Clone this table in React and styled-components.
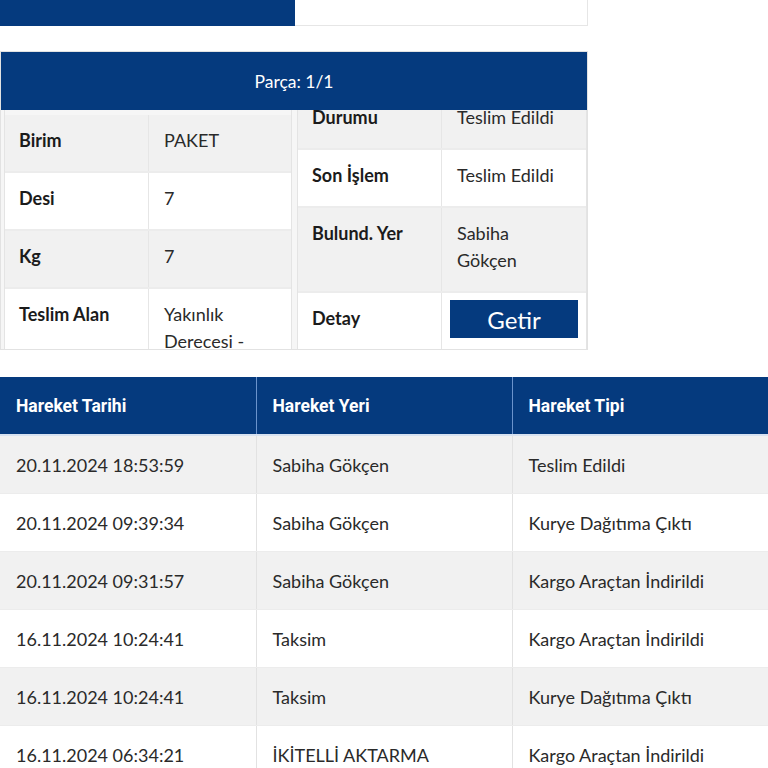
import React from 'react';
import styled, { createGlobalStyle } from 'styled-components';

const GlobalStyle = createGlobalStyle`
  html, body {
    margin: 0;
    padding: 0;
    background: #fff;
  }
  body {
    font-family: Lato, "Open Sans", sans-serif;
    color: #222;
  }
`;

const NAVY = '#053a7e';

const Page = styled.div`
  width: 768px;
`;

const TabStrip = styled.div`
  display: flex;
  width: 588px;
  height: 26px;
`;

const Tab = styled.div`
  flex: 0 0 ${p => p.w}px;
  background: ${p => (p.active ? NAVY : '#fff')};
  border-bottom: ${p => (p.active ? 'none' : '1px solid #e6e6e6')};
  border-right: ${p => (p.active ? 'none' : '1px solid #e6e6e6')};
  box-sizing: border-box;
`;

const Panel = styled.section`
  margin-top: 25px;
  width: 588px;
  border: 1px solid #e2e2e2;
  box-sizing: border-box;
  background: #f6f6f6;
`;

const PanelHeader = styled.div`
  height: 58px;
  background: ${NAVY};
  color: #fff;
  font-size: 17.5px;
  display: flex;
  align-items: center;
  justify-content: center;
  position: relative;
  z-index: 1;
`;

const PanelBody = styled.div`
  display: flex;
  gap: 5px;
  height: 239px;
  padding: 0 1px 0 3px;
`;

const Column = styled.div`
  flex: 0 0 ${p => p.w}px;
  overflow: hidden;
  border-left: 1px solid #e4e4e4;
  border-right: 1px solid #e4e4e4;
  box-sizing: border-box;
`;

const ColumnInner = styled.div`
  margin-top: ${p => p.offset}px;
`;

const InfoRow = styled.div`
  display: grid;
  grid-template-columns: 144px 1fr;
  background: ${p => (p.alt ? '#f1f1f1' : '#fff')};
  border-bottom: 2px solid #ececec;
`;

const InfoLabel = styled.div`
  padding: 12px 14px 17px;
  line-height: 27px;
  font-size: 18px;
  font-weight: 700;
  color: #1b1b1b;
  border-right: 1px solid #e6e6e6;
  align-self: stretch;
`;

const InfoValue = styled.div`
  padding: ${p => (p.button ? '7px 8px 11px' : '12px 15px 17px')};
  line-height: 27px;
  font-size: 18px;
  color: #2a2a2a;
`;

const GetirButton = styled.button`
  display: block;
  width: 128px;
  height: 38px;
  border: none;
  background: ${NAVY};
  color: #fff;
  font-family: Lato, sans-serif;
  font-size: 24px;
  padding: 0;
  cursor: pointer;
`;

const Moves = styled.table`
  margin-top: 27px;
  width: 768px;
  border-collapse: collapse;
  table-layout: fixed;
`;

const HeadCell = styled.th`
  height: 57px;
  background: ${NAVY};
  color: #fff;
  text-align: left;
  padding: 0 16px;
  font-family: Roboto, "Liberation Sans", sans-serif;
  font-weight: 700;
  font-size: 17.5px;
  border-left: 1px solid #6b93cc;
  border-bottom: 2px solid #d7e2f1;
  &:first-child { border-left: none; }
`;

const Row = styled.tr`
  background: ${p => (p.alt ? '#f1f1f1' : '#fff')};
`;

const Cell = styled.td`
  height: 57px;
  padding: 0 16px;
  font-size: 18px;
  color: #2a2a2a;
  border-left: 1px solid #e2e2e2;
  border-bottom: 1px solid #ececec;
  &:first-child { border-left: none; }
`;

const left = [
  ['Birim', 'PAKET'],
  ['Desi', '7'],
  ['Kg', '7'],
  ['Teslim Alan', 'Yakınlık Derecesi - Kendisi'],
];

const right = [
  ['Durumu', 'Teslim Edildi'],
  ['Son İşlem', 'Teslim Edildi'],
  ['Bulund. Yer', 'Sabiha Gökçen'],
];

const moves = [
  ['20.11.2024 18:53:59', 'Sabiha Gökçen', 'Teslim Edildi'],
  ['20.11.2024 09:39:34', 'Sabiha Gökçen', 'Kurye Dağıtıma Çıktı'],
  ['20.11.2024 09:31:57', 'Sabiha Gökçen', 'Kargo Araçtan İndirildi'],
  ['16.11.2024 10:24:41', 'Taksim', 'Kargo Araçtan İndirildi'],
  ['16.11.2024 10:24:41', 'Taksim', 'Kurye Dağıtıma Çıktı'],
  ['16.11.2024 06:34:21', 'İKİTELLİ AKTARMA', 'Kargo Araçtan İndirildi'],
];

export default function App() {
  return (
    <Page>
      <GlobalStyle />
      <TabStrip>
        <Tab active w={295} />
        <Tab w={293} />
      </TabStrip>

      <Panel>
        <PanelHeader>Parça: 1/1</PanelHeader>
        <PanelBody>
          <Column w={288}>
            <ColumnInner offset={5}>
              {left.map(([k, v], i) => (
                <InfoRow key={k} alt={i % 2 === 0}>
                  <InfoLabel>{k}</InfoLabel>
                  <InfoValue>{v}</InfoValue>
                </InfoRow>
              ))}
            </ColumnInner>
          </Column>
          <Column w={290}>
            <ColumnInner offset={-18}>
              {right.map(([k, v], i) => (
                <InfoRow key={k} alt={i % 2 === 0}>
                  <InfoLabel>{k}</InfoLabel>
                  <InfoValue>{v}</InfoValue>
                </InfoRow>
              ))}
              <InfoRow>
                <InfoLabel>Detay</InfoLabel>
                <InfoValue button>
                  <GetirButton>Getir</GetirButton>
                </InfoValue>
              </InfoRow>
            </ColumnInner>
          </Column>
        </PanelBody>
      </Panel>

      <Moves>
        <thead>
          <tr>
            <HeadCell>Hareket Tarihi</HeadCell>
            <HeadCell>Hareket Yeri</HeadCell>
            <HeadCell>Hareket Tipi</HeadCell>
          </tr>
        </thead>
        <tbody>
          {moves.map((m, i) => (
            <Row key={i} alt={i % 2 === 0}>
              <Cell>{m[0]}</Cell>
              <Cell>{m[1]}</Cell>
              <Cell>{m[2]}</Cell>
            </Row>
          ))}
        </tbody>
      </Moves>
    </Page>
  );
}
